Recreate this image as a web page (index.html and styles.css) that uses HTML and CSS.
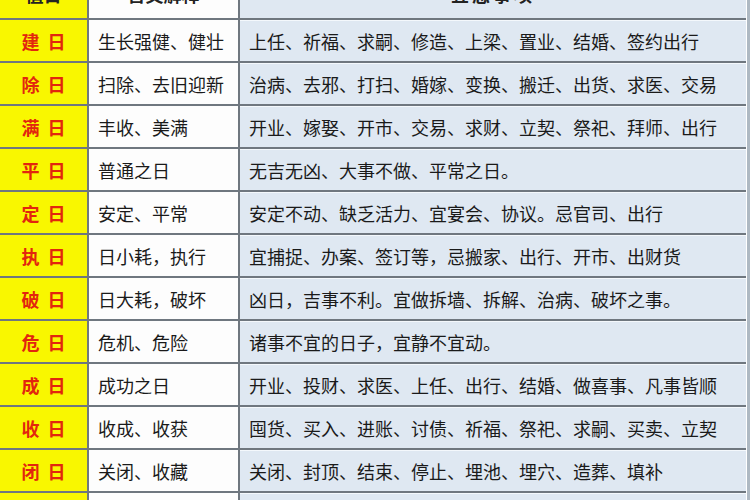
FILE: index.html
```html
<!DOCTYPE html>
<html lang="zh">
<head>
<meta charset="utf-8">
<title>建除十二值日</title>
<link rel="stylesheet" href="styles.css">
</head>
<body>
<div class="table">
  <div class="row head">
    <div class="c1">值日</div>
    <div class="c2">含义解释</div>
    <div class="c3">宜忌事项</div>
  </div>
  <div class="row"><div class="c1">建 日</div><div class="c2">生长强健、健壮</div><div class="c3">上任、祈福、求嗣、修造、上梁、置业、结婚、签约出行</div></div>
  <div class="row"><div class="c1">除 日</div><div class="c2">扫除、去旧迎新</div><div class="c3">治病、去邪、打扫、婚嫁、变换、搬迁、出货、求医、交易</div></div>
  <div class="row"><div class="c1">满 日</div><div class="c2">丰收、美满</div><div class="c3">开业、嫁娶、开市、交易、求财、立契、祭祀、拜师、出行</div></div>
  <div class="row"><div class="c1">平 日</div><div class="c2">普通之日</div><div class="c3">无吉无凶、大事不做、平常之日。</div></div>
  <div class="row"><div class="c1">定 日</div><div class="c2">安定、平常</div><div class="c3">安定不动、缺乏活力、宜宴会、协议。忌官司、出行</div></div>
  <div class="row"><div class="c1">执 日</div><div class="c2">日小耗，执行</div><div class="c3">宜捕捉、办案、签订等，忌搬家、出行、开市、出财货</div></div>
  <div class="row"><div class="c1">破 日</div><div class="c2">日大耗，破坏</div><div class="c3">凶日，吉事不利。宜做拆墙、拆解、治病、破坏之事。</div></div>
  <div class="row"><div class="c1">危 日</div><div class="c2">危机、危险</div><div class="c3">诸事不宜的日子，宜静不宜动。</div></div>
  <div class="row"><div class="c1">成 日</div><div class="c2">成功之日</div><div class="c3">开业、投财、求医、上任、出行、结婚、做喜事、凡事皆顺</div></div>
  <div class="row"><div class="c1">收 日</div><div class="c2">收成、收获</div><div class="c3">囤货、买入、进账、讨债、祈福、祭祀、求嗣、买卖、立契</div></div>
  <div class="row"><div class="c1">闭 日</div><div class="c2">关闭、收藏</div><div class="c3">关闭、封顶、结束、停止、埋池、埋穴、造葬、填补</div></div>
  <div class="row"><div class="c1">开 日</div><div class="c2">开始、开通</div><div class="c3">开业、开市、求财、出行、结婚、入学、动土</div></div>
</div>
</body>
</html>
```

FILE: styles.css
```css
html, body {
  margin: 0;
  padding: 0;
}
body {
  background: #aeb9c3;
  width: 750px;
  height: 500px;
  overflow: hidden;
  font-family: "Noto Sans CJK SC", "Noto Sans", sans-serif;
  color: #1a1a1a;
}
.table {
  width: 746px;
  margin-top: -23px;
  border-right: 1px solid #ffffff;
}
.row {
  display: grid;
  grid-template-columns: 89px 151px 1fr;
  height: 43px;
  box-sizing: border-box;
  border-bottom: 2px solid #6f777f;
}
.row > div {
  display: flex;
  align-items: center;
  font-size: 18px;
  white-space: nowrap;
  overflow: hidden;
}
.c1 {
  background: #f9f700;
  border-right: 2px solid #6f777f;
  justify-content: center;
  color: #e2260e;
  font-weight: bold;
  font-size: 19px;
  word-spacing: 4px;
}
.c2 {
  background: #fdfdfd;
  border-right: 2px solid #6f777f;
  padding-left: 9px;
}
.c3 {
  background: #dfe8f2;
  padding-left: 9px;
  box-shadow: inset 0 1px 0 #f4f8fc;
}
.head > div {
  font-weight: bold;
  color: #222;
  justify-content: center;
  padding-left: 0;
  padding-bottom: 7px;
}
.head .c1 {
  color: #222;
}
.head .c3 {
  letter-spacing: 3px;
}
```
